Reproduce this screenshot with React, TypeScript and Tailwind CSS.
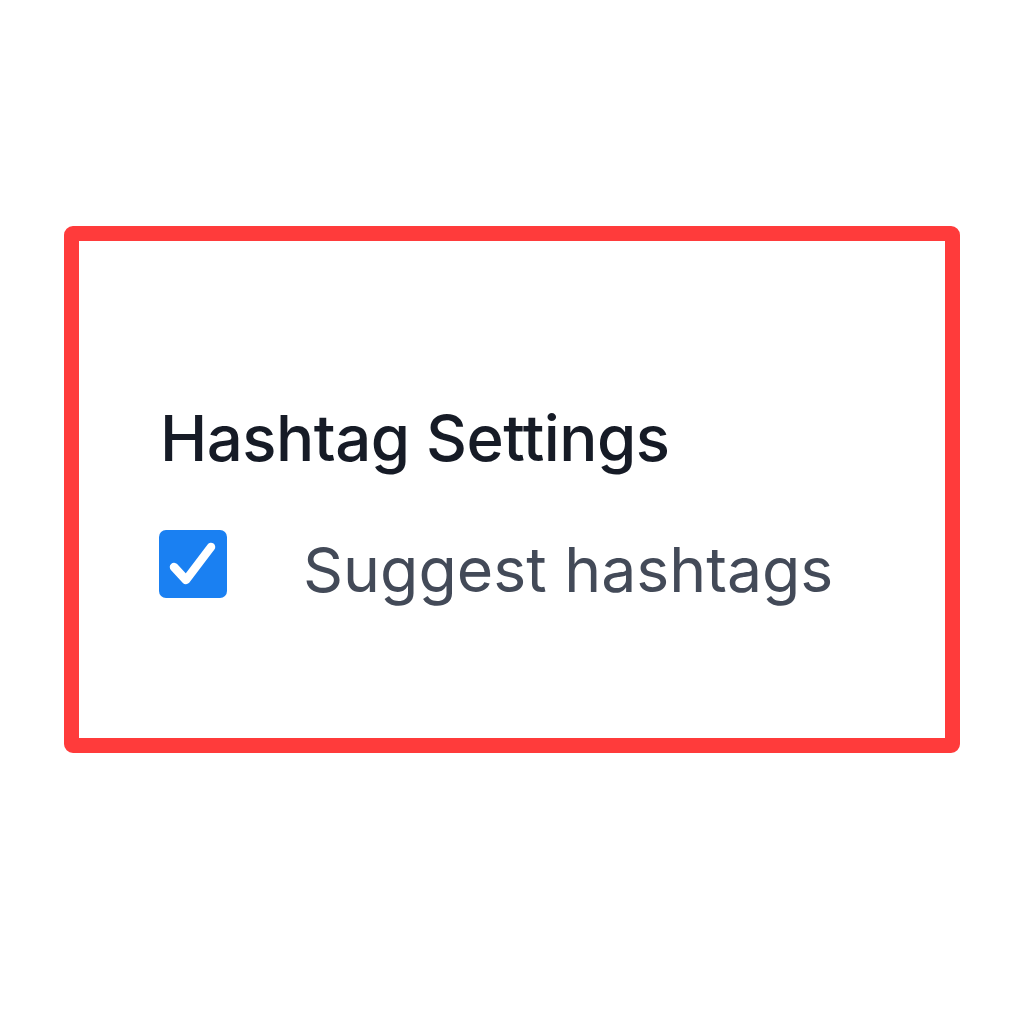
import React from 'react';

const App = () => {
  return (
    <div className="w-[1024px] h-[1024px] bg-white pt-[226px] pl-[64px] font-['Inter','Noto_Sans',sans-serif]">
      {/* Settings card */}
      <div className="w-[896px] h-[527px] border-[15px] border-[#ff3b3b] rounded-[9px] pl-[80px] pt-[165px]">
        <h2 className="ml-px text-[63.5px] leading-none font-medium text-[#161b26] tracking-[-0.5px]">Hashtag Settings</h2>
        <label className="flex items-start mt-[60px]">
          <span className="w-[68px] h-[68px] rounded-[7px] bg-[#1a80f2] flex items-center justify-center">
            <svg viewBox="0 0 68 68" className="w-[68px] h-[68px]" fill="none" stroke="white" strokeWidth="8.5" strokeLinecap="round" strokeLinejoin="round">
              <path d="M15 37L27 50L52 17" />
            </svg>
          </span>
          <span className="ml-[76px] mt-[8px] text-[62.5px] leading-none text-[#434a58]">Suggest hashtags</span>
        </label>
      </div>
    </div>
  );
};

export default App;
